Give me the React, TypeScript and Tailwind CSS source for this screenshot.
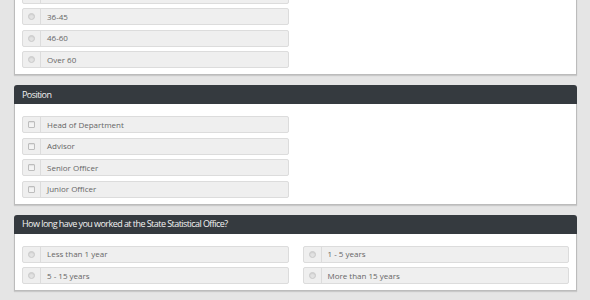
import React from 'react';

type Kind = 'radio' | 'checkbox';

const Mark: React.FC<{ kind: Kind }> = ({ kind }) =>
  kind === 'radio' ? (
    <span className="block w-[7px] h-[7px] rounded-full border border-[#c9c9c9] bg-[#e2e2e2] shadow-[inset_0_1px_1px_rgba(0,0,0,0.08)]" />
  ) : (
    <span className="block w-[7px] h-[7px] rounded-[1px] border border-[#bdbdbd] bg-[#f4f4f4] shadow-[inset_0_1px_1px_rgba(0,0,0,0.08)]" />
  );

const Option: React.FC<{ label: string; kind: Kind }> = ({ label, kind }) => (
  <label className="flex h-[17px] items-stretch rounded-[2px] border border-[#dcdcdc] bg-[#efefef]">
    <span className="flex w-[18px] shrink-0 items-center justify-center border-r border-[#dcdcdc]">
      <Mark kind={kind} />
    </span>
    <span className="flex items-center pl-[6px] text-[8px] leading-none text-[#666]">{label}</span>
  </label>
);

const Panel: React.FC<{
  title: string;
  kind: Kind;
  left: string[];
  right?: string[];
}> = ({ title, kind, left, right = [] }) => (
  <section className="w-[563px]">
    <div className="flex h-[19px] items-center rounded-t-[3px] bg-[#353a3f] px-[8px] text-[9px] tracking-[-0.55px] text-[#f2f2f2]">
      {title}
    </div>
    <div className="grid grid-cols-2 gap-x-[14px] border border-t-0 border-[#bcbcbc] bg-white px-[7px] pt-[12px] pb-[6px] shadow-[0_1px_1px_rgba(0,0,0,0.12)]">
      <div className="flex flex-col gap-[4.5px]">
        {left.map((l) => (
          <Option key={l} label={l} kind={kind} />
        ))}
      </div>
      <div className="flex flex-col gap-[4.5px]">
        {right.map((l) => (
          <Option key={l} label={l} kind={kind} />
        ))}
      </div>
    </div>
  </section>
);

export default function App() {
  return (
    <div
      className="h-[300px] w-[590px] overflow-hidden bg-[#e5e5e5]"
      style={{ fontFamily: '"Open Sans", "Liberation Sans", sans-serif' }}
    >
      <div className="-mt-[66px] flex flex-col gap-[10px] pl-[14px]">
        <Panel title="Age" kind="radio" left={['18-25', '26-35', '36-45', '46-60', 'Over 60']} />
        <Panel
          title="Position"
          kind="checkbox"
          left={['Head of Department', 'Advisor', 'Senior Officer', 'Junior Officer']}
        />
        <Panel
          title="How long have you worked at the State Statistical Office?"
          kind="radio"
          left={['Less than 1 year', '5 - 15 years']}
          right={['1 - 5 years', 'More than 15 years']}
        />
      </div>
    </div>
  );
}
